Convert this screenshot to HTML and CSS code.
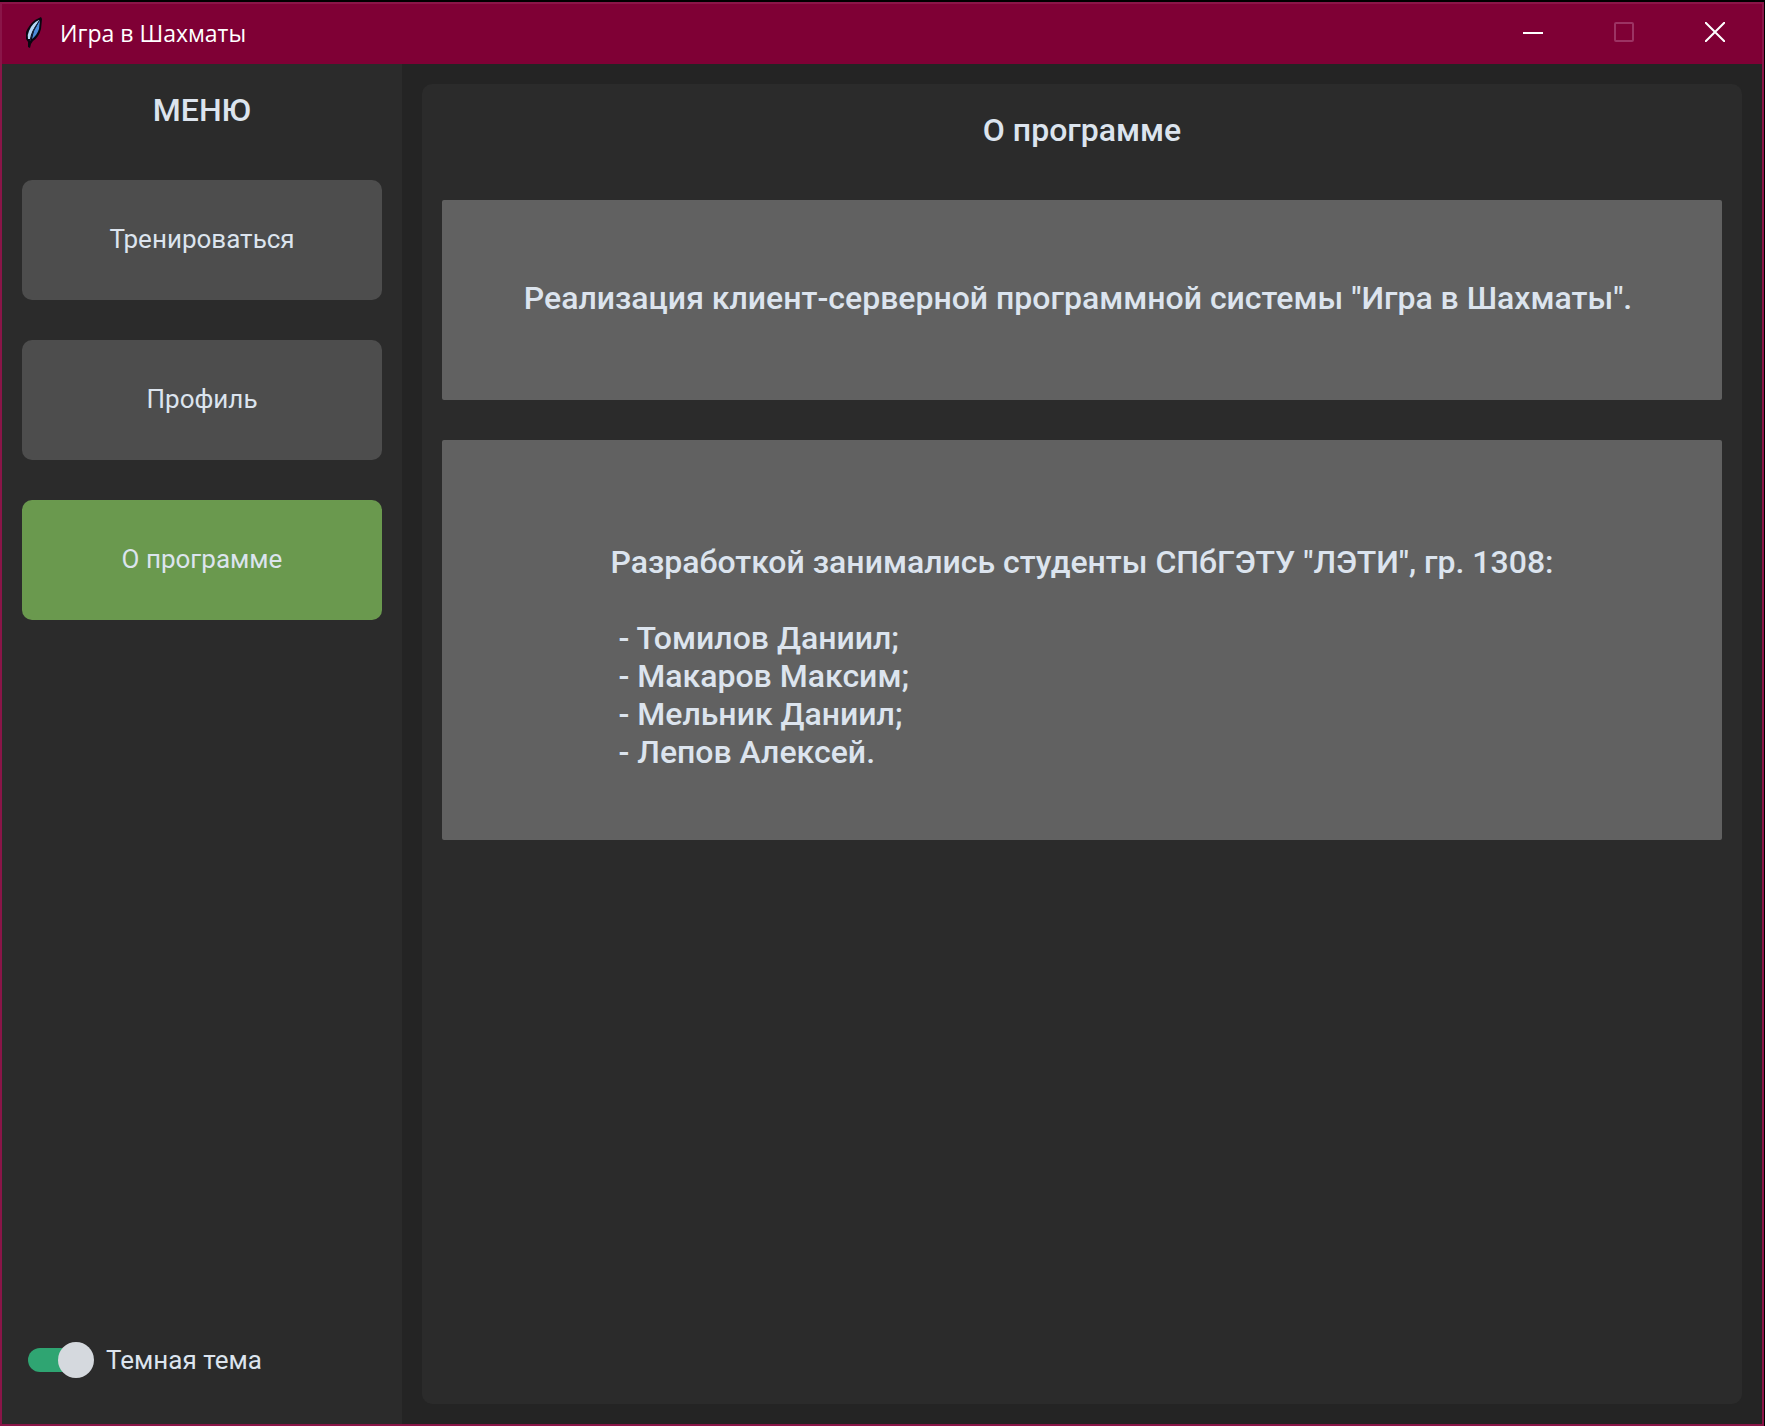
FILE: index.html
```html
<!DOCTYPE html>
<html lang="ru">
<head>
<meta charset="utf-8">
<title>Игра в Шахматы</title>
<link rel="stylesheet" href="styles.css">
</head>
<body>
<div class="window">
  <header class="titlebar">
    <svg class="feather" width="20" height="32" viewBox="0 0 20 32" aria-hidden="true">
      <path d="M17 0 18 2 17 12Q15 20 9 24L7 27 6 31 4 30 4 25 2 22V15Q5 8 11 3Z" fill="#090610"/>
      <path d="M15 3Q8 6 5 14Q3 18 4 22L6 22Q7 14 15 4Z" fill="#b5d8f6"/>
      <path d="M16 3 15 12Q13 18 8 22L10 14Z" fill="#4b8cdb"/>
      <path d="M15 4Q9 12 6 24" fill="none" stroke="#142440" stroke-width="1"/>
    </svg>
    <span class="caption">Игра в Шахматы</span>
    <div class="controls">
      <button type="button" aria-label="Свернуть"><svg width="20" height="20" viewBox="0 0 20 20"><path d="M0 11H20" stroke="#fff" stroke-width="2"/></svg></button>
      <button type="button" aria-label="Развернуть" disabled><svg width="20" height="20" viewBox="0 0 20 20"><rect x="1" y="1" width="18" height="18" rx="1" fill="none" stroke="#9c3363" stroke-width="2"/></svg></button>
      <button type="button" aria-label="Закрыть"><svg width="20" height="20" viewBox="0 0 20 20"><path d="M0 0 20 20M20 0 0 20" stroke="#fff" stroke-width="2"/></svg></button>
    </div>
  </header>
  <div class="body">
    <aside class="sidebar">
      <h2 class="heading">МЕНЮ</h2>
      <nav class="menu">
        <button type="button" class="item">Тренироваться</button>
        <button type="button" class="item">Профиль</button>
        <button type="button" class="item active">О программе</button>
      </nav>
      <label class="theme">
        <input type="checkbox" role="switch" class="switch" checked>
        <span>Темная тема</span>
      </label>
    </aside>
    <main class="panel">
      <h1 class="heading">О программе</h1>
      <section class="card">
        <p>Реализация клиент-серверной программной системы "Игра в Шахматы". </p>
      </section>
      <section class="card authors">
        <div>
          <p>Разработкой занимались студенты СПбГЭТУ "ЛЭТИ", гр. 1308:</p>
          <ul>
            <li>- Томилов Даниил;</li>
            <li>- Макаров Максим;</li>
            <li>- Мельник Даниил;</li>
            <li>- Лепов Алексей.</li>
          </ul>
        </div>
      </section>
    </main>
  </div>
</div>
</body>
</html>
```
FILE: styles.css
```css
* { box-sizing: border-box; }
body {
  margin: 0;
  padding: 2px 1px 0 0;
  background: #000;
  color: #dce4ee;
  font-family: Roboto, "Liberation Sans", sans-serif;
  font-size: 26px;
  line-height: 30px;
}
h1, h2, p, ul { margin: 0; padding: 0; }
button { font: inherit; color: inherit; border: 0; padding: 0; }
.window {
  display: flex;
  flex-direction: column;
  min-height: calc(100vh - 2px);
  border: 2px solid #8a1548;
  background: #242424;
}
.titlebar {
  display: flex;
  align-items: center;
  height: 60px;
  padding: 0 2px 2px 22px;
  background: #7f0035;
}
.caption {
  margin-left: 16px;
  color: #fff;
  font-family: "Open Sans", "Noto Sans", sans-serif;
  font-size: 23px;
}
.controls { display: flex; height: 100%; margin-left: auto; }
.controls button {
  display: flex;
  align-items: center;
  justify-content: center;
  width: 91px;
  padding-bottom: 2px;
  background: none;
}
.body { display: flex; flex: 1; }
.sidebar {
  display: flex;
  flex-direction: column;
  flex: 0 0 400px;
  padding: 20px;
  background: #2b2b2b;
}
.heading {
  margin-bottom: 44px;
  font-size: 32px;
  font-weight: 500;
  line-height: 52px;
  text-align: center;
}
.menu { display: flex; flex-direction: column; gap: 40px; }
.item {
  height: 120px;
  padding-bottom: 2px;
  border-radius: 10px;
  background: #4d4d4d;
}
.item.active { background: #6a994e; }
.theme {
  display: flex;
  align-items: center;
  gap: 12px;
  margin: auto 6px 26px;
}
.switch {
  appearance: none;
  display: flex;
  align-items: center;
  margin: 0;
}
.switch::before {
  content: "";
  width: 48px;
  height: 24px;
  border-radius: 12px;
  background: #2fa572;
}
.switch::after {
  content: "";
  width: 36px;
  height: 36px;
  margin-left: -18px;
  border-radius: 50%;
  background: #d5d9de;
}
.panel {
  flex: 1;
  margin: 20px;
  padding: 20px;
  border-radius: 10px;
  background: #2b2b2b;
}
.card {
  display: flex;
  align-items: center;
  justify-content: center;
  min-height: 200px;
  padding-bottom: 4px;
  border-radius: 2px;
  background: #616161;
  font-size: 32px;
  font-weight: 500;
  line-height: 38px;
}
.card p { white-space: pre-wrap; }
.authors {
  min-height: 400px;
  margin-top: 40px;
  padding-top: 38px;
}
.authors ul {
  margin-top: 38px;
  padding-left: 8px;
  list-style: none;
}
```
